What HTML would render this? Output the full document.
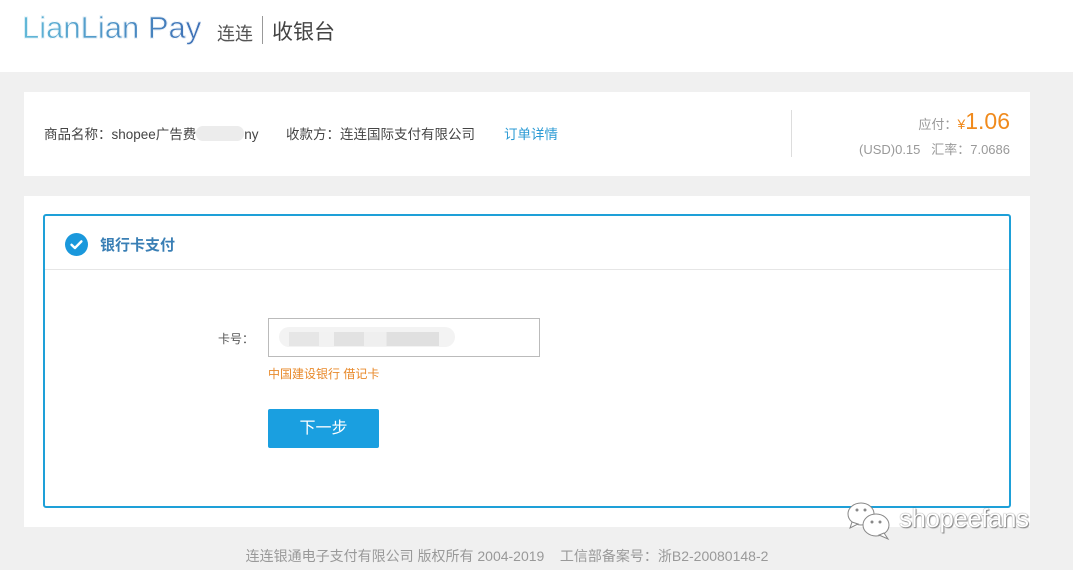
<!DOCTYPE html>
<html><head><meta charset="utf-8"><style>
*{margin:0;padding:0;box-sizing:border-box}
body{width:1073px;height:570px;background:#f0f0f0;font-family:"Liberation Sans","Noto Sans CJK SC",sans-serif;position:relative;overflow:hidden;color:#333}
.abs{position:absolute}
.hdr{left:0;top:0;width:1073px;height:72px;background:#fff}
.card{background:#fff}
</style></head><body>
<div class="abs hdr">
 <div class="abs" style="left:22px;top:10px;font-size:31px;letter-spacing:0px;background:linear-gradient(90deg,#62b9d8,#3d6fb5);-webkit-background-clip:text;color:transparent;-webkit-text-stroke:0.6px #fff">LianLian Pay</div>
 <div class="abs" style="left:217px;top:20px;font-size:18px;color:#555">连连</div>
 <div class="abs" style="left:262px;top:16px;width:1px;height:28px;background:#999"></div>
 <div class="abs" style="left:272px;top:16px;font-size:21px;color:#444">收银台</div>
</div>
<div class="abs card" style="left:24px;top:92px;width:1006px;height:84px">
 <div class="abs" style="left:20px;top:31px;font-size:13.5px;color:#444;white-space:nowrap">商品名称：shopee广告费<span style="display:inline-block;width:48px;height:15px;background:#ececec;border-radius:7px;vertical-align:-2px"></span>ny</div>
 <div class="abs" style="left:262px;top:31px;font-size:13.5px;color:#444">收款方：连连国际支付有限公司</div>
 <div class="abs" style="left:480px;top:31px;font-size:13.5px;color:#2a9ad4">订单详情</div>
 <div class="abs" style="left:767px;top:18px;width:1px;height:47px;background:#ddd"></div>
 <div class="abs" style="right:20px;top:16px;font-size:13px;color:#999;text-align:right;white-space:nowrap">应付：<span style="color:#f08a1c;font-size:14px">¥</span><span style="color:#f08a1c;font-size:23px">1.06</span></div>
 <div class="abs" style="right:20px;top:47px;font-size:13px;color:#999;white-space:nowrap">(USD)0.15&nbsp;&nbsp;&nbsp;汇率：7.0686</div>
</div>
<div class="abs card" style="left:24px;top:196px;width:1006px;height:331px"></div>
<div class="abs" style="left:43px;top:214px;width:968px;height:294px;border:2px solid #1ea0d8;border-radius:3px;background:#fff">
 <div class="abs" style="left:0;top:53px;width:964px;height:1px;background:#e6e6e6"></div>
 <div class="abs" style="left:20px;top:17px;width:23px;height:23px;border-radius:50%;background:#1a98dc">
  <svg width="23" height="23" viewBox="0 0 23 23"><path d="M6.5 11.8l3.4 3.2 6.5-6.6" fill="none" stroke="#fff" stroke-width="2.4" stroke-linecap="round" stroke-linejoin="round"/></svg>
 </div>
 <div class="abs" style="left:55px;top:18px;font-size:15px;font-weight:bold;color:#3a7fb5">银行卡支付</div>
 <div class="abs" style="left:173px;top:114px;font-size:12px;color:#555">卡号：</div>
 <div class="abs" style="left:223px;top:102px;width:272px;height:39px;border:1px solid #bbb;background:#fff">
  <div class="abs" style="left:10px;top:8px;width:176px;height:20px;border-radius:10px;background:#f3f3f3"></div>
  <div class="abs" style="left:20px;top:13px;width:150px;height:14px;background:linear-gradient(90deg,#e6e6e6 0 20%,#f2f2f2 20% 30%,#e2e2e2 30% 50%,#efefef 50% 65%,#e0e0e0 65% 100%)"></div>
 </div>
 <div class="abs" style="left:223px;top:149px;font-size:12px;color:#e8892a">中国建设银行 借记卡</div>
 <div class="abs" style="left:223px;top:193px;width:111px;height:39px;background:#1a9fe0;border-radius:2px;color:#fff;font-size:16px;text-align:center;line-height:39px">下一步</div>
</div>
<svg class="abs" style="left:846px;top:500px" width="50" height="42" viewBox="0 0 50 42">
 <g fill="#fff" stroke="#888" stroke-width="1">
 <ellipse cx="15" cy="14" rx="13" ry="11"/><path d="M6 22l-2 6 8-4z"/>
 <ellipse cx="30" cy="25" rx="13" ry="11"/><path d="M38 33l4 6-9-4z"/>
 </g>
 <circle cx="11" cy="10" r="1.5" fill="#888"/><circle cx="19" cy="10" r="1.5" fill="#888"/>
 <circle cx="26" cy="22" r="1.5" fill="#888"/><circle cx="34" cy="22" r="1.5" fill="#888"/>
</svg>
<div class="abs" style="left:899px;top:503px;font-size:26px;color:#fff;text-shadow:0 0 1px #555,1px 1px 1px #888;letter-spacing:-0.5px">shopeefans</div>
<div class="abs" style="left:0;width:1014px;top:546px;text-align:center;font-size:14px;color:#999">连连银通电子支付有限公司 版权所有 2004-2019&nbsp;&nbsp;&nbsp;&nbsp;工信部备案号：浙B2-20080148-2</div>
</body></html>
